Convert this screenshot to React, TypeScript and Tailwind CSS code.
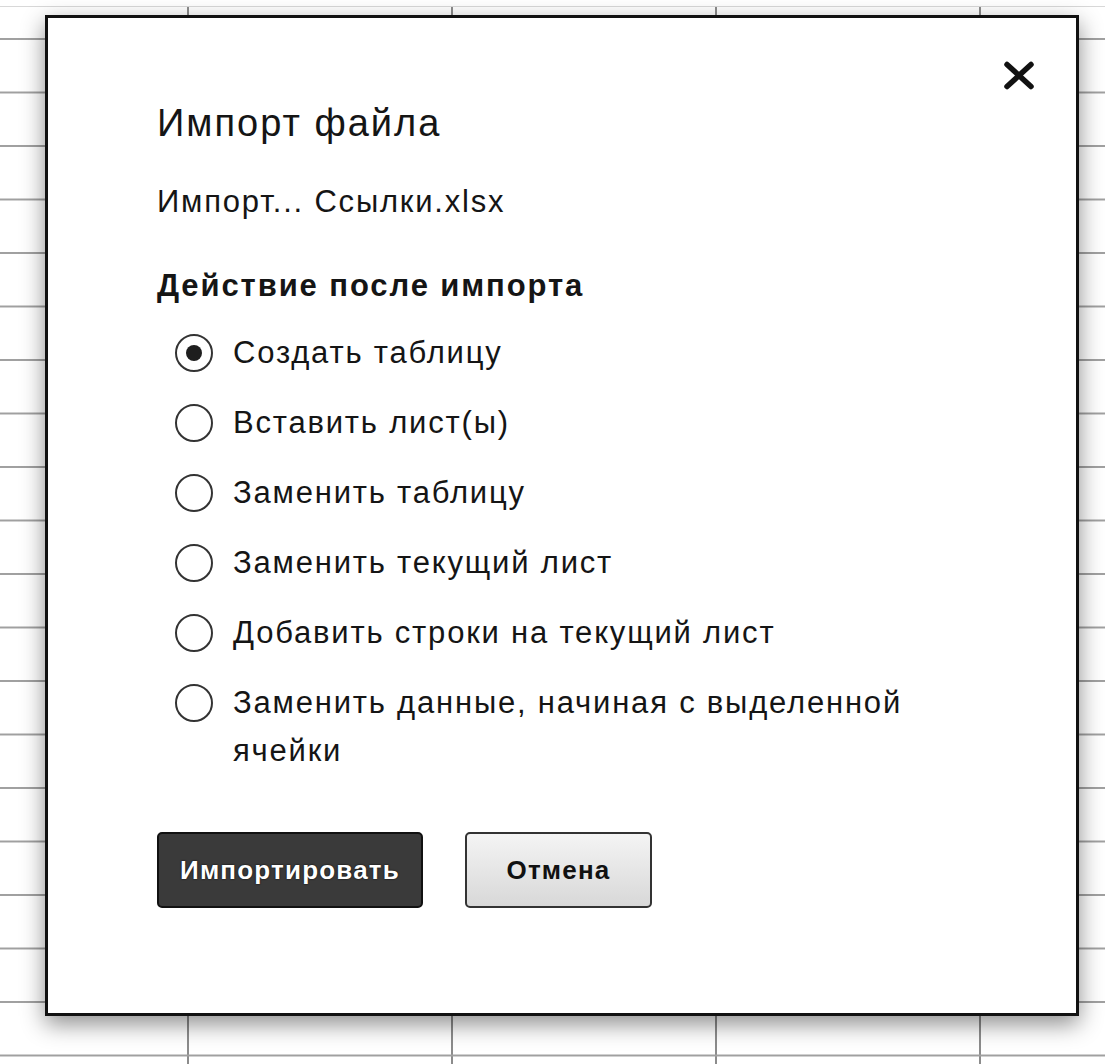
import { useState } from 'react';

const options = [
  'Создать таблицу',
  'Вставить лист(ы)',
  'Заменить таблицу',
  'Заменить текущий лист',
  'Добавить строки на текущий лист',
  'Заменить данные, начиная с выделенной ячейки',
];

function Radio({ checked }: { checked: boolean }) {
  return (
    <span className="mt-[5px] grid h-[38px] w-[38px] shrink-0 place-items-center rounded-full border-[2.5px] border-[#333] bg-white">
      {checked && <span className="h-[16px] w-[16px] rounded-full bg-[#1e1e1e]" />}
    </span>
  );
}

function CloseIcon() {
  return (
    <svg width="32" height="29" viewBox="0 0 32 29" aria-hidden>
      <path d="M4 3.5 L28 25.5 M28 3.5 L4 25.5" stroke="#111" strokeWidth="5.5" strokeLinecap="round" />
    </svg>
  );
}

export default function App() {
  const [choice, setChoice] = useState(0);

  return (
    <div
      className="relative h-[1064px] w-[1105px] overflow-hidden bg-white bg-[linear-gradient(to_bottom,#a0a0a0_2px,transparent_2px),linear-gradient(to_right,#8c8c8c_2px,transparent_2px)] bg-[size:264px_53.5px] bg-[position:187px_38px]"
      style={{ fontFamily: '"Liberation Sans", Arial, sans-serif' }}
    >
      {/* column header strip above the sheet */}
      <div className="h-[7px] border-b border-[#d8d8d8] bg-white" />

      {/* import dialog */}
      <div className="absolute left-[45px] top-[15px] flex h-[1001px] w-[1034px] flex-col border-[3px] border-[#111] bg-white pl-[109px] pt-[40px] text-[#151515] shadow-[0_8px_22px_rgba(0,0,0,0.45)]">
        <button className="absolute right-[41px] top-[43px]">
          <CloseIcon />
        </button>

        <h1 className="mt-[45px] text-[38px] leading-[40px] tracking-[2px]">Импорт файла</h1>
        <div className="mt-[41px] text-[31px] leading-[36px] tracking-[1.8px]">Импорт... Ссылки.xlsx</div>
        <div className="mt-[48px] text-[31px] font-bold leading-[36px] tracking-[1.9px]">Действие после импорта</div>

        <div className="mt-[25px] flex flex-col gap-[22px] pl-[18px]">
          {options.map((label, i) => (
            <label key={label} className="flex cursor-pointer items-start gap-[20px]" onClick={() => setChoice(i)}>
              <Radio checked={choice === i} />
              <span className="max-w-[700px] text-[31px] leading-[48px] tracking-[1.8px]">{label}</span>
            </label>
          ))}
        </div>

        <div className="mt-[57px] flex gap-[42px]">
          <button className="h-[76px] w-[266px] rounded-[5px] border-[2px] border-[#111] bg-[#3a3a3a] text-[26px] font-bold tracking-[1.2px] text-white [text-shadow:0_0_2px_#000]">
            Импортировать
          </button>
          <button className="h-[76px] w-[187px] rounded-[5px] border-[2px] border-[#333] bg-[linear-gradient(to_bottom,#f4f4f4,#d8d8d8)] text-[26px] font-bold tracking-[1.2px] text-[#111]">
            Отмена
          </button>
        </div>
      </div>
    </div>
  );
}
